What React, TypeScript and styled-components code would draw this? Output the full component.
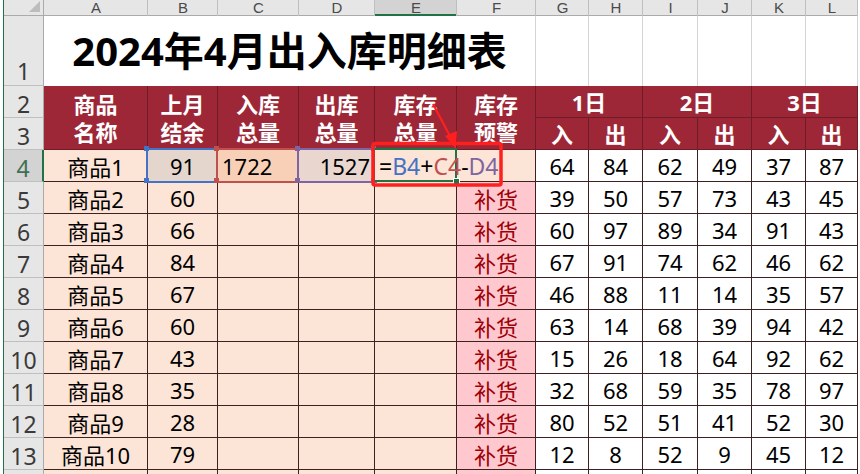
import React from "react";
import styled, { createGlobalStyle, css } from "styled-components";

const FONT = `"Noto Sans", "Noto Sans CJK SC", sans-serif`;
const PEACH = "#fce4d6";
const PINK = "#ffc7ce";
const HEAD_RED = "#9e2737";
const HEAD_LINE = "#6e1c27";
const DATA_LINE = "#3d2020";
const GREEN = "#217346";

const GlobalStyle = createGlobalStyle`
  html, body { margin: 0; padding: 0; background: #fff; overflow: hidden; }
  body { font-family: ${FONT}; }
`;

const Page = styled.div`
  position: relative;
  display: flex;
  width: 860px;
  height: 474px;
  overflow: hidden;
  background: #fff;
`;

const Sliver = styled.div`
  flex: none;
  width: 3px;
  border-right: 1px solid ${GREEN};
  background: #fff;
`;

const Sheet = styled.div`
  flex: none;
  display: grid;
  grid-template-columns: 40px 104px 70px 81px 76px 82px 79px 53px 54px 55px 54px 54px 52px;
  grid-template-rows: 16px 70px 32px 32px repeat(11, 32px);
`;

const Base = styled.div`
  box-sizing: border-box;
  display: flex;
  align-items: center;
  justify-content: center;
  white-space: nowrap;
  min-width: 0;
`;

const Corner = styled(Base)`
  background: #e6e6e6;
  border-right: 1px solid #ababab;
  border-bottom: 1px solid #ababab;
  justify-content: flex-end;
  align-items: flex-end;
  padding: 0 3px 3px 0;
`;

const CornerTri = styled.div`
  width: 0;
  height: 0;
  border-left: 11px solid transparent;
  border-bottom: 11px solid #bdbdbd;
`;

const ColHead = styled(Base)<{ $sel?: boolean }>`
  background: ${(p) => (p.$sel ? "#d3d3d3" : "#e6e6e6")};
  box-shadow: inset -1px 0 0 #bfbfbf,
    inset 0 ${(p) => (p.$sel ? "-2px 0 " + GREEN : "-1px 0 #ababab")};
  font-family: "Liberation Sans", "Noto Sans", sans-serif;
  font-size: 15px;
  line-height: 16px;
  color: #4a4a4a;
`;

const RowHead = styled(Base)<{ $sel?: boolean; $bottom?: boolean }>`
  background: ${(p) => (p.$sel ? "#d3d3d3" : "#e6e6e6")};
  border-right: ${(p) => (p.$sel ? `2px solid ${GREEN}` : "1px solid #ababab")};
  border-bottom: 1px solid #bfbfbf;
  font-size: 23px;
  line-height: 24px;
  color: ${(p) => (p.$sel ? "#3f6f55" : "#3a3a3a")};
  align-items: ${(p) => (p.$bottom ? "flex-end" : "center")};
  padding: ${(p) => (p.$bottom ? "0 0 2px" : "4px 0 0")};
`;

const TitleCell = styled(Base)`
  grid-column: span 6;
  background: #fff;
  border-right: 1px solid #d4d4d4;
  align-items: flex-end;
  padding-bottom: 11px;
  font-size: 40px;
  font-weight: 700;
  line-height: 48px;
  color: #000;
`;

const BlankCell = styled(Base)`
  background: #fff;
  border-right: 1px solid #d4d4d4;
`;

const HeadCell = styled(Base)<{ $rows?: number; $cols?: number }>`
  grid-row: span ${(p) => p.$rows ?? 1};
  grid-column: span ${(p) => p.$cols ?? 1};
  background: ${HEAD_RED};
  border-right: 1px solid ${HEAD_LINE};
  border-bottom: 1px solid ${HEAD_LINE};
  color: #fff;
  font-weight: 700;
  font-size: 22px;
  line-height: 28px;
  text-align: center;
  flex-direction: column;
  padding-top: 1px;
`;

type Align = "left" | "center" | "right";

const DataCell = styled(Base)<{ $bg: string; $align?: Align; $color?: string }>`
  background: ${(p) => p.$bg};
  border-right: 1px solid ${DATA_LINE};
  border-bottom: 1px solid ${DATA_LINE};
  font-size: 22px;
  color: ${(p) => p.$color ?? "#000"};
  padding: 1px 4px 0;
  justify-content: ${(p) =>
    p.$align === "left" ? "flex-start" : p.$align === "right" ? "flex-end" : "center"};
`;

const RefCell = styled(DataCell)<{ $ref: string; $w: number }>`
  position: relative;
  z-index: 1;
  &::after {
    content: "";
    position: absolute;
    left: -2px;
    top: -2px;
    width: ${(p) => p.$w}px;
    height: 31px;
    border: 2px solid ${(p) => p.$ref};
    box-sizing: content-box;
    pointer-events: none;
  }
  &::before {
    content: "";
    position: absolute;
    left: -4px;
    top: -4px;
    width: 5px;
    height: 5px;
    background: ${(p) => p.$ref};
    box-shadow: ${(p) => css`
      ${p.$w}px 0 0 ${p.$ref}, 0 32px 0 ${p.$ref}, ${p.$w}px 32px 0 ${p.$ref}
    `};
    z-index: 2;
  }
`;

const ActiveCell = styled(DataCell)`
  position: relative;
  z-index: 3;
  overflow: visible;
  &::after {
    content: "";
    position: absolute;
    left: -2px;
    top: -2px;
    width: 80px;
    height: 30px;
    border: 2px solid ${GREEN};
    pointer-events: none;
  }
  &::before {
    content: "";
    position: absolute;
    right: -4px;
    bottom: -4px;
    width: 5px;
    height: 5px;
    background: ${GREEN};
    border: 1px solid #fff;
    z-index: 2;
  }
`;

const Formula = styled.span`
  position: relative;
  z-index: 4;
  font-size: 23px;
`;

const Tok = styled.span<{ $c: string }>`
  color: ${(p) => p.$c};
`;

const Overlay = styled.svg`
  position: absolute;
  left: 0;
  top: 0;
  width: 860px;
  height: 474px;
  pointer-events: none;
  z-index: 10;
`;

const COLS = ["A", "B", "C", "D", "E", "F", "G", "H", "I", "J", "K", "L"];

const B_VALUES = [91, 60, 66, 84, 67, 60, 43, 35, 28, 79];
const DAILY = [
  [64, 84, 62, 49, 37, 87],
  [39, 50, 57, 73, 43, 45],
  [60, 97, 89, 34, 91, 43],
  [67, 91, 74, 62, 46, 62],
  [46, 88, 11, 14, 35, 57],
  [63, 14, 68, 39, 94, 42],
  [15, 26, 18, 64, 92, 62],
  [32, 68, 59, 35, 78, 97],
  [80, 52, 51, 41, 52, 30],
  [12, 8, 52, 9, 45, 12],
];

export default function App() {
  return (
    <>
      <GlobalStyle />
      <Page>
        <Sliver />
        <Sheet>
          {/* column header row */}
          <Corner>
            <CornerTri />
          </Corner>
          {COLS.map((c) => (
            <ColHead key={c} $sel={c === "E"}>
              {c}
            </ColHead>
          ))}

          {/* row 1: title */}
          <RowHead $bottom>1</RowHead>
          <TitleCell>2024年4月出入库明细表</TitleCell>
          {COLS.slice(6).map((c) => (
            <BlankCell key={c} />
          ))}

          {/* rows 2-3: headers */}
          <RowHead>2</RowHead>
          {[
            ["商品", "名称"],
            ["上月", "结余"],
            ["入库", "总量"],
            ["出库", "总量"],
            ["库存", "总量"],
            ["库存", "预警"],
          ].map(([a, b], i) => (
            <HeadCell key={i} $rows={2}>
              <span>{a}</span>
              <span>{b}</span>
            </HeadCell>
          ))}
          {["1日", "2日", "3日"].map((d) => (
            <HeadCell key={d} $cols={2}>
              {d}
            </HeadCell>
          ))}
          <RowHead>3</RowHead>
          {["入", "出", "入", "出", "入", "出"].map((t, i) => (
            <HeadCell key={i}>{t}</HeadCell>
          ))}

          {/* data rows */}
          {B_VALUES.map((b, i) => {
            const r = i + 4;
            const first = i === 0;
            return (
              <React.Fragment key={r}>
                <RowHead $sel={first}>{r}</RowHead>
                <DataCell $bg={PEACH}>商品{i + 1}</DataCell>
                {first ? (
                  <>
                    <RefCell $bg="#e4d6cc" $ref="#4472c4" $w={70}>
                      {b}
                    </RefCell>
                    <RefCell $bg="#f8d0b7" $ref="#c0504d" $w={81} $align="left">
                      1722
                    </RefCell>
                    <RefCell $bg="#e9d6cf" $ref="#8064a2" $w={76} $align="right">
                      1527
                    </RefCell>
                    <ActiveCell $bg={PEACH} $align="left">
                      <Formula>
                        <Tok $c="#000">=</Tok>
                        <Tok $c="#4472c4">B4</Tok>
                        <Tok $c="#000">+</Tok>
                        <Tok $c="#c0504d">C4</Tok>
                        <Tok $c="#000">-</Tok>
                        <Tok $c="#8064a2">D4</Tok>
                      </Formula>
                    </ActiveCell>
                    <DataCell $bg={PEACH} />
                  </>
                ) : (
                  <>
                    <DataCell $bg={PEACH}>{b}</DataCell>
                    <DataCell $bg={PEACH} />
                    <DataCell $bg={PEACH} />
                    <DataCell $bg={PEACH} />
                    <DataCell $bg={PINK} $color="#9c0006">
                      补货
                    </DataCell>
                  </>
                )}
                {DAILY[i].map((v, j) => (
                  <DataCell key={j} $bg="#fff">
                    {v}
                  </DataCell>
                ))}
              </React.Fragment>
            );
          })}

          {/* row 14 (only its top edge is visible) */}
          <RowHead />
          {COLS.map((c, j) => (
            <DataCell key={c} $bg={j < 5 ? PEACH : j === 5 ? PINK : "#fff"} />
          ))}
        </Sheet>

        <Overlay viewBox="0 0 860 474">
          <rect
            x={373}
            y={143.5}
            width={128}
            height={41.5}
            rx={2}
            fill="none"
            stroke="#ff1f1f"
            strokeWidth={3.5}
          />
          <line x1={433} y1={104} x2={451} y2={138} stroke="#ff1f1f" strokeWidth={2.2} />
          <polygon points="456,149 445,136 457,131" fill="#ff1f1f" />
        </Overlay>
      </Page>
    </>
  );
}
